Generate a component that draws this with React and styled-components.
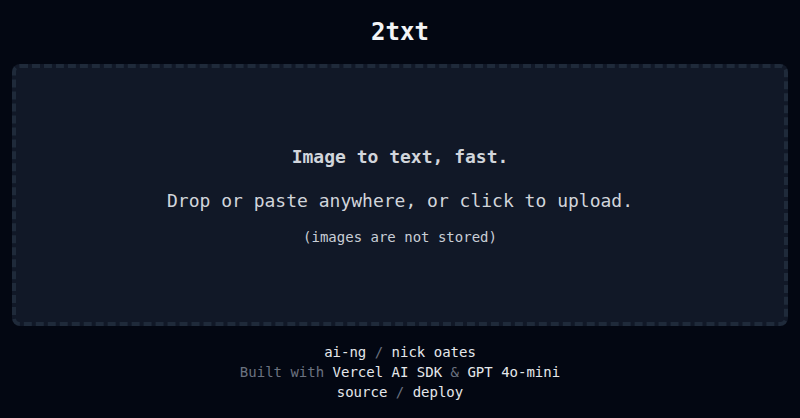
import styled, { createGlobalStyle } from "styled-components";

const GlobalStyle = createGlobalStyle`
  html, body {
    margin: 0;
    padding: 0;
    background: #030712;
  }
  body {
    font-family: "DejaVu Sans Mono", "Liberation Mono", monospace;
    color: #e5e7eb;
  }
`;

const Page = styled.div`
  display: flex;
  flex-direction: column;
  height: 100vh;
  box-sizing: border-box;
  padding: 16px 12px;
  gap: 16px;
`;

const Title = styled.h1`
  margin: 0;
  text-align: center;
  font-size: 24px;
  line-height: 32px;
  font-weight: 700;
  color: #f3f4f6;
`;

const DropZone = styled.div`
  flex: 1;
  display: flex;
  flex-direction: column;
  align-items: center;
  justify-content: center;
  background: #111827;
  border: 4px dashed #1f2a3a;
  border-radius: 8px;
  cursor: pointer;
`;

const Heading = styled.p`
  margin: 0;
  font-size: 18px;
  line-height: 28px;
  font-weight: 700;
  color: #d1d5db;
`;

const Lead = styled.p`
  margin: 16px 0 0;
  font-size: 18px;
  line-height: 28px;
  color: #d1d5db;
`;

const Note = styled.p`
  margin: 12px 0 0;
  font-size: 14px;
  line-height: 20px;
  color: #c9ced6;
`;

const Footer = styled.footer`
  display: flex;
  flex-direction: column;
  align-items: center;
  font-size: 14px;
  line-height: 20px;
  color: #6b7280;
`;

const Link = styled.a`
  color: #e5e7eb;
  text-decoration: none;
`;

export default function App() {
  return (
    <>
      <GlobalStyle />
      <Page>
        <Title>2txt</Title>
        <DropZone>
          <Heading>Image to text, fast.</Heading>
          <Lead>Drop or paste anywhere, or click to upload.</Lead>
          <Note>(images are not stored)</Note>
        </DropZone>
        <Footer>
          <div>
            <Link href="#">ai-ng</Link> / <Link href="#">nick oates</Link>
          </div>
          <div>
            Built with <Link href="#">Vercel AI SDK</Link> &amp;{" "}
            <Link href="#">GPT 4o-mini</Link>
          </div>
          <div>
            <Link href="#">source</Link> / <Link href="#">deploy</Link>
          </div>
        </Footer>
      </Page>
    </>
  );
}
